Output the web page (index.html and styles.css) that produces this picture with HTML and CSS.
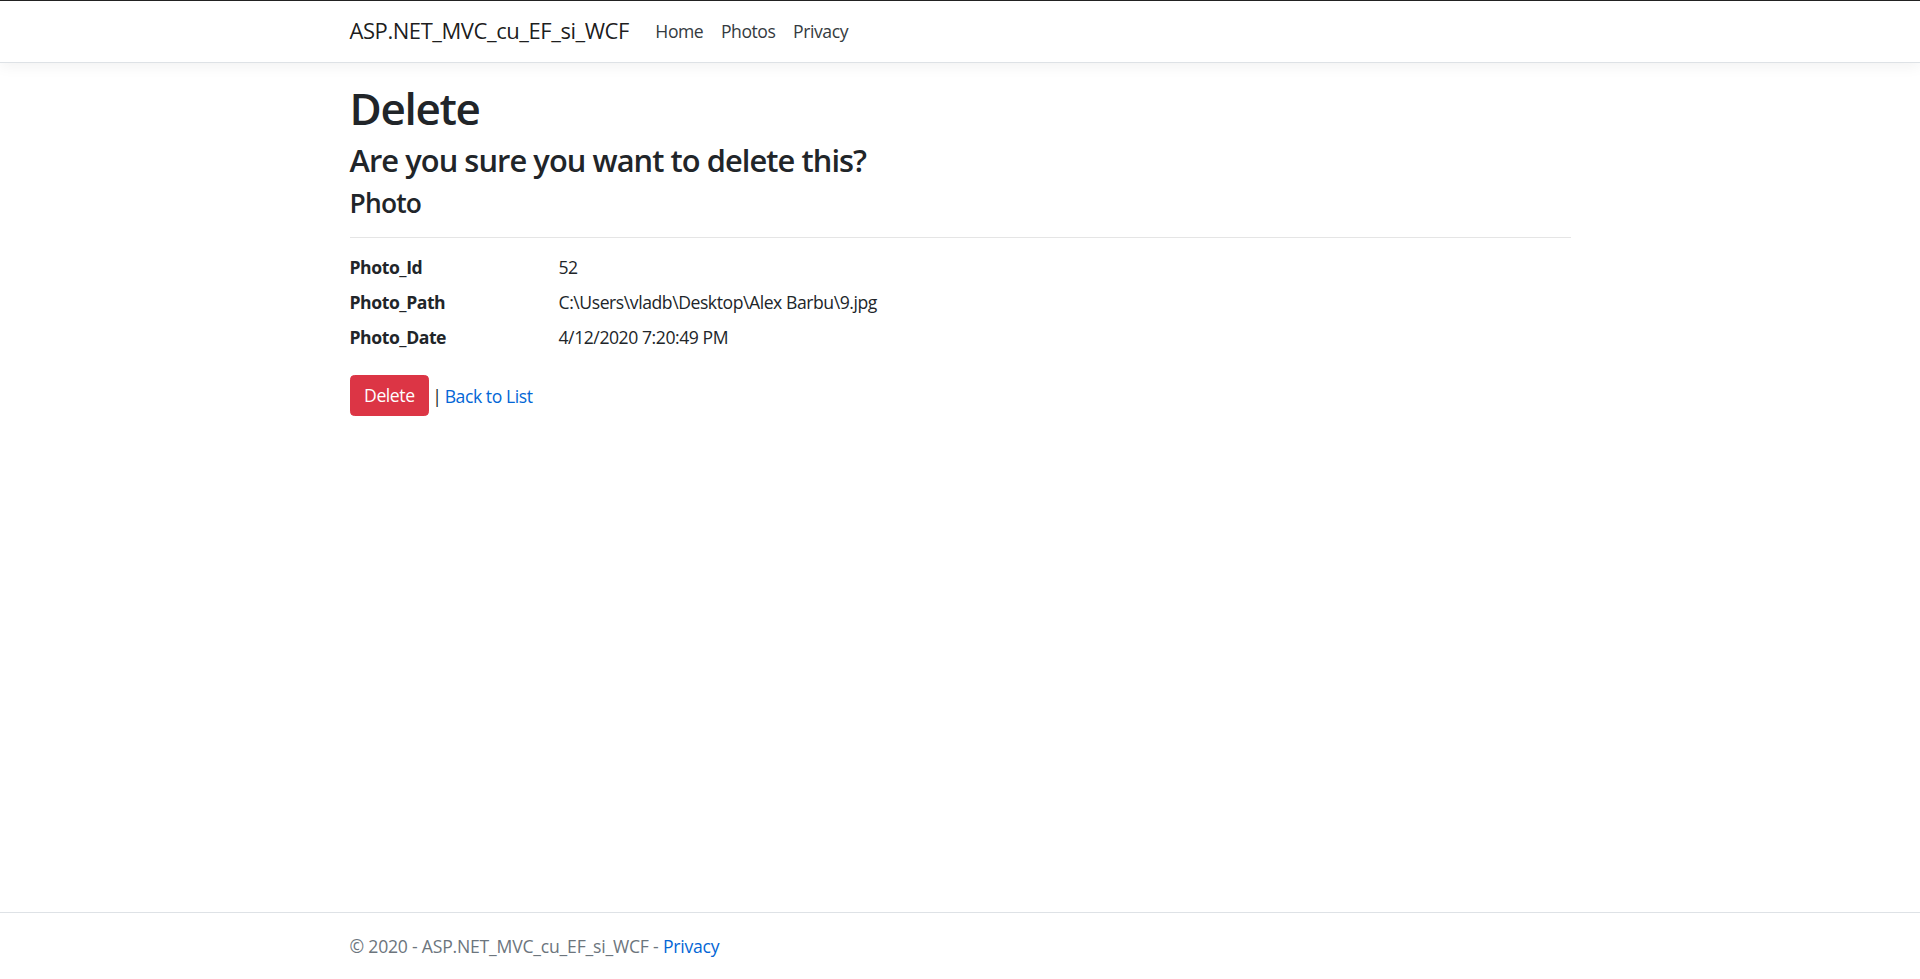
FILE: index.html
```html
<!DOCTYPE html>
<html lang="en">
<head>
<meta charset="utf-8">
<title>Delete - ASP.NET_MVC_cu_EF_si_WCF</title>
<link rel="stylesheet" href="styles.css">
</head>
<body>
<header>
  <nav class="navbar">
    <div class="container nav-inner">
      <a class="brand" href="#">ASP.NET_MVC_cu_EF_si_WCF</a>
      <ul class="nav-list">
        <li><a class="nav-link" href="#">Home</a></li>
        <li><a class="nav-link" href="#">Photos</a></li>
        <li><a class="nav-link" href="#">Privacy</a></li>
      </ul>
    </div>
  </nav>
</header>
<div class="container page">
  <main class="main">
    <h1 class="title">Delete</h1>
    <h3 class="question">Are you sure you want to delete this?</h3>
    <div>
      <h4 class="entity">Photo</h4>
      <hr class="divider">
      <dl class="details">
        <dt>Photo_Id</dt>
        <dd>52</dd>
        <dt>Photo_Path</dt>
        <dd>C:\Users\vladb\Desktop\Alex Barbu\9.jpg</dd>
        <dt>Photo_Date</dt>
        <dd>4/12/2020 7:20:49 PM</dd>
      </dl>
      <form class="actions">
        <button type="button" class="btn-danger">Delete</button> | <a class="link" href="#">Back to List</a>
      </form>
    </div>
  </main>
</div>
<footer class="footer">
  <div class="container">&copy; 2020 - ASP.NET_MVC_cu_EF_si_WCF - <a class="link" href="#">Privacy</a></div>
</footer>
</body>
</html>
```

FILE: styles.css
```css
* { box-sizing: border-box; }

html, body {
  margin: 0;
  padding: 0;
}

body {
  min-height: 100vh;
  display: flex;
  flex-direction: column;
  font-family: "Open Sans", "Noto Sans", sans-serif;
  font-size: 17.6px;
  line-height: 1.5;
  letter-spacing: -0.025em;
  color: #212529;
  background: #fff;
}

.container {
  width: 100%;
  max-width: 1254px;
  margin: 0 auto;
  padding: 0 16.5px;
}

.navbar {
  background: #fff;
  border-bottom: 1px solid #dee2e6;
  box-shadow: inset 0 1px 0 #222, 0 4.4px 13.2px rgba(0, 0, 0, 0.05);
  padding: 8.8px 17.6px;
  margin-bottom: 17.6px;
}

.nav-inner {
  display: flex;
  align-items: center;
}

.brand {
  font-size: 22px;
  line-height: 33px;
  padding: 5.5px 0;
  margin-right: 17.6px;
  color: rgba(0, 0, 0, 0.9);
  text-decoration: none;
  white-space: nowrap;
}

.nav-list {
  display: flex;
  list-style: none;
  margin: 0;
  padding: 0;
}

.nav-link {
  display: block;
  padding: 8.8px;
  color: #343a40;
  text-decoration: none;
}

.page {
  flex: 1;
}

.main {
  padding-top: 2px;
  padding-bottom: 17.6px;
}

.title, .question, .entity {
  margin: 0 0 8.8px;
  font-weight: 600;
  line-height: 1.2;
  letter-spacing: -0.03em;
}

.title { font-size: 44px; margin-bottom: 6.8px; }
.question { font-size: 30.8px; }
.entity { font-size: 26.4px; }

.divider {
  margin: 17.6px 0 16.2px;
  border: 0;
  border-top: 1px solid rgba(0, 0, 0, 0.1);
}

.details {
  display: grid;
  grid-template-columns: 209px 1fr;
  margin: 0 -16.5px 15px;
}

.details dt,
.details dd {
  padding: 0 16.5px;
}

.details dt {
  font-weight: 700;
}

.details dd {
  margin: 0 0 8.8px;
}

.actions {
  margin: 0;
  word-spacing: -1px;
}

.btn-danger {
  display: inline-block;
  font-family: inherit;
  font-size: 17.6px;
  line-height: 1.5;
  letter-spacing: -0.025em;
  word-spacing: 0;
  font-weight: 400;
  color: #fff;
  background: #dc3545;
  border: 1px solid #dc3545;
  padding: 6.6px 13.6px;
  border-radius: 4.4px;
  cursor: pointer;
}

.link {
  color: #0366d6;
  text-decoration: none;
}

.actions .link {
  word-spacing: 0;
}

.footer {
  border-top: 1px solid #dee2e6;
  line-height: 66px;
  color: #6c757d;
  white-space: nowrap;
  letter-spacing: -0.012em;
}
```
